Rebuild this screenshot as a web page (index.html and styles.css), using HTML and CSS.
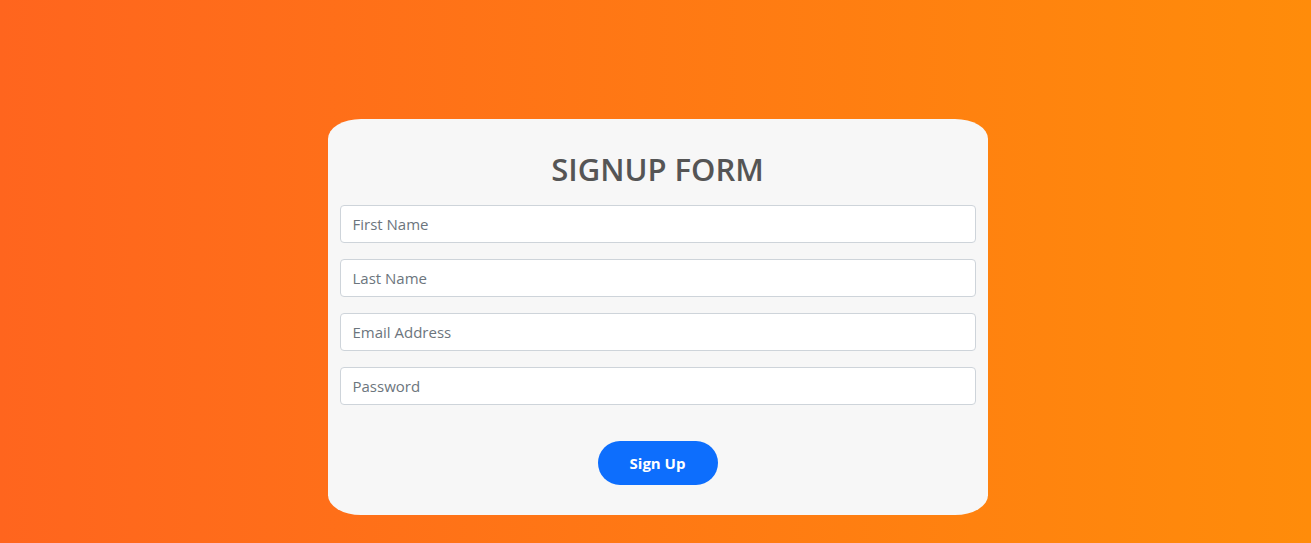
FILE: index.html
```html
<!DOCTYPE html>
<html lang="en">
<head>
<meta charset="utf-8">
<title>Signup Form</title>
<link rel="stylesheet" href="styles.css">
</head>
<body>
<main class="page">
  <form class="card">
    <h2 class="title">SIGNUP FORM</h2>
    <input class="field" type="text" placeholder="First Name">
    <input class="field" type="text" placeholder="Last Name">
    <input class="field" type="email" placeholder="Email Address">
    <input class="field" type="password" placeholder="Password">
    <div class="actions">
      <button class="btn" type="button">Sign Up</button>
    </div>
  </form>
</main>
</body>
</html>
```
FILE: styles.css
```css
* { box-sizing: border-box; }
html, body { margin: 0; height: 100%; }
body {
  font-family: "Open Sans", "Noto Sans", sans-serif;
  background: linear-gradient(to right, #ff651e, #ff8c0a);
  overflow: hidden;
}
.page {
  display: flex;
  justify-content: center;
  padding-top: 119px;
  padding-left: 4px;
}
.card {
  width: 660px;
  background: #f7f7f7;
  border-radius: 5%;
  padding: 31px 12px 30px;
  display: flex;
  flex-direction: column;
  gap: 16px;
}
.title {
  margin: 0 0 1px;
  text-align: center;
  font-size: 31px;
  font-weight: 600;
  color: #555;
  line-height: 38px;
}
.field {
  display: block;
  width: 100%;
  height: 38px;
  padding: 6px 12px;
  border: 1px solid #ced4da;
  border-radius: 4px;
  background: #fff;
  font-family: inherit;
  font-size: 15px;
  color: #212529;
}
.field::placeholder { color: #6c757d; }
.actions {
  display: flex;
  justify-content: center;
  padding-top: 20px;
}
.btn {
  width: 120px;
  height: 44px;
  border: none;
  border-radius: 22px;
  background: #0d6efd;
  color: #fff;
  font-family: inherit;
  font-size: 15px;
  font-weight: 700;
}
```
